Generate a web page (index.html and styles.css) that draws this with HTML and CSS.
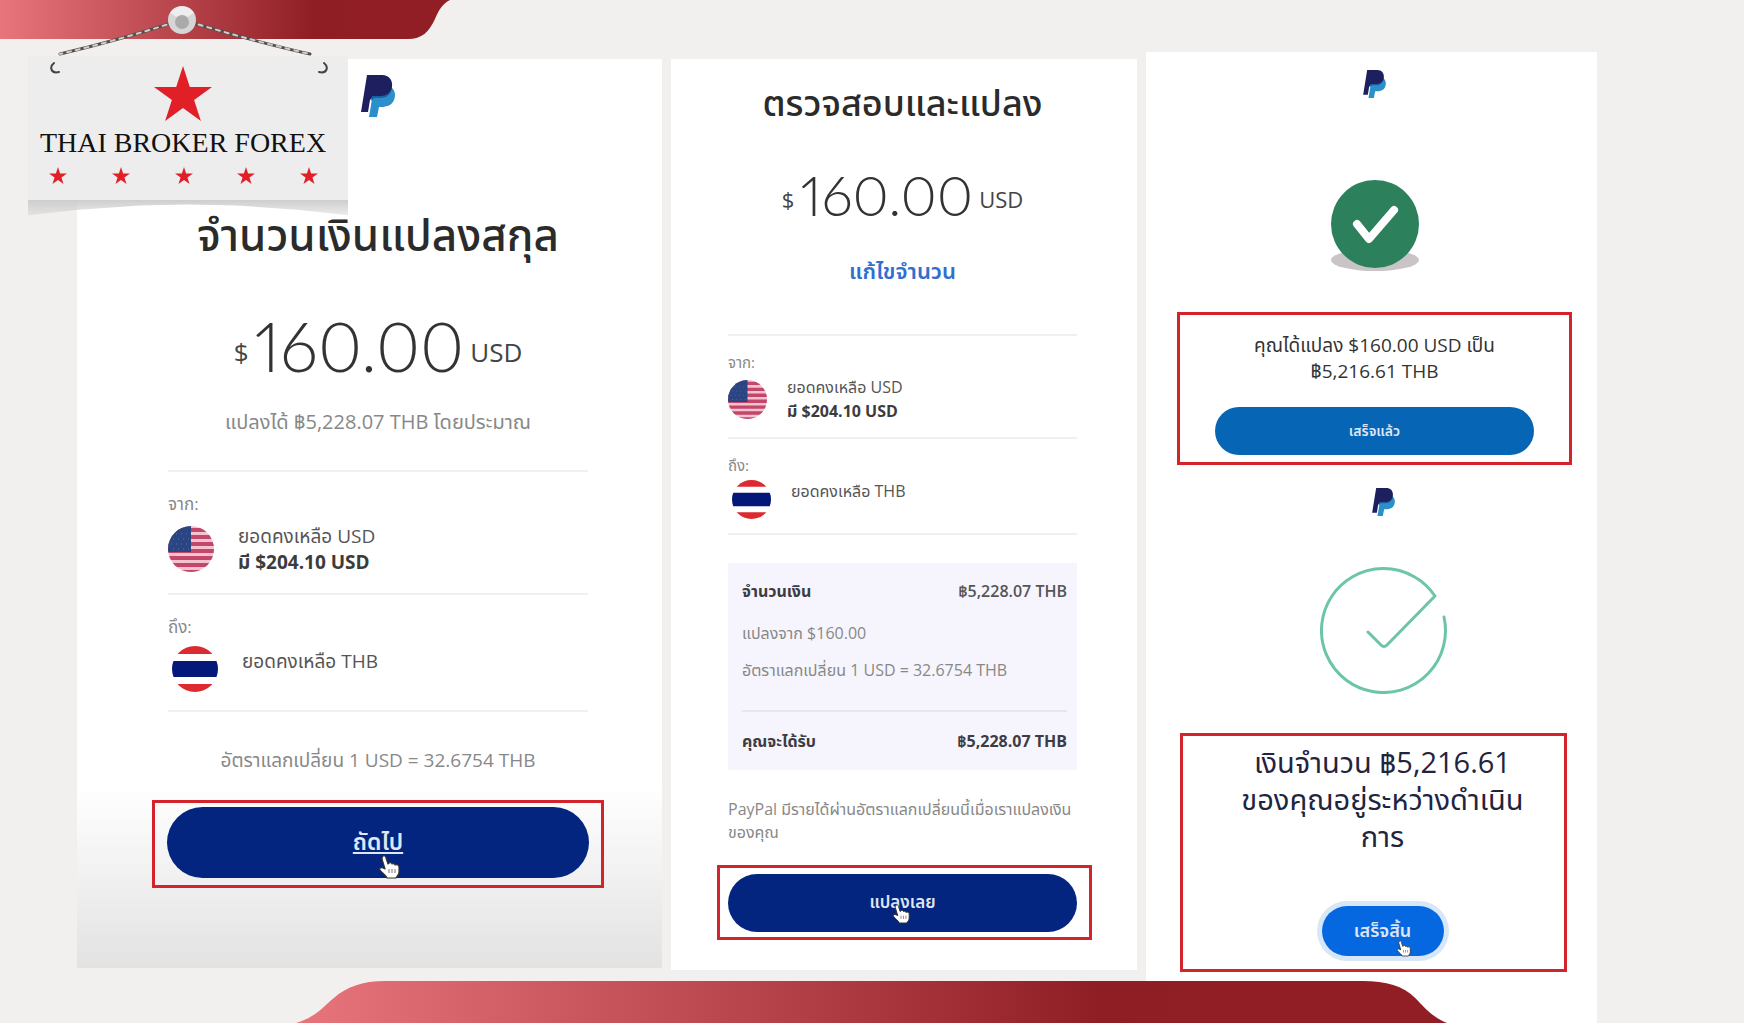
FILE: index.html
```html
<!DOCTYPE html>
<html lang="th">
  <head>
    <meta charset="UTF-8" />
    <meta name="viewport" content="width=device-width, initial-scale=1.0" />
    <title>Thai Broker Forex</title>
    <link rel="stylesheet" href="styles.css">
  </head>
  <body>
    <!-- shared shapes -->
    <svg class="defs" width="0" height="0" aria-hidden="true">
      <defs>
        <linearGradient id="red" x1="0" x2="1" y1="0" y2="0">
          <stop offset="0" stop-color="#e8757b" />
          <stop offset="0.35" stop-color="#bd4a50" />
          <stop offset="0.7" stop-color="#8f1e24" />
          <stop offset="1" stop-color="#921e25" />
        </linearGradient>
        <clipPath id="round"><circle cx="23" cy="23" r="23" /></clipPath>
        <symbol id="star" viewBox="0 0 58 55">
          <path fill="#e01f27" d="M29 0l6.8 21H58L40.100 34l6.800 21L29 42 11.100 55l6.800-21L0 21h22.200z" />
        </symbol>
        <symbol id="paypal" viewBox="0 0 34 42">
          <path fill="#2a8fca" d="M30 12c4 3 5 8 3 13-2 5-7 7-13 7h-2l-2 10H8l4-24z" />
          <path fill="#1d1f5e" d="M6 0h15c7 0 11 5 10 12-1 7-6 10-13 10h-6l-3 3-2 12H0z" />
          <path fill="#1c5f9f" d="M31 13c-1 6-5 10-12 10h-6l-3 3 1-5h9c5 0 9-3 11-8z" />
        </symbol>
        <symbol id="usa" viewBox="0 0 46 46">
          <g clip-path="url(#round)">
            <path fill="#f3c3d0" d="M0 0h46v46H0z" />
            <path stroke="#c2476a" stroke-width="4" d="M0 4h46M0 11h46M0 18h46M0 25h46M0 32h46M0 39h46M0 46h46" />
            <path fill="#2b4583" d="M0 0h23v26H0z" />
            <path stroke="#5670a8" stroke-width="1" stroke-dasharray="1 4" d="M3 8h20M5 13h18M3 18h20M5 23h18" />
          </g>
        </symbol>
        <symbol id="thai" viewBox="0 0 46 46">
          <g clip-path="url(#round)">
            <path fill="#fff" d="M0 0h46v46H0z" />
            <path fill="#dc2a30" d="M0 0h46v8H0zM0 38h46v8H0z" />
            <path fill="#04187a" d="M0 15h46v16H0z" />
          </g>
        </symbol>
        <symbol id="hand" viewBox="0 0 22 24">
          <path fill="#fff" stroke="#333" stroke-width="1.200" stroke-linejoin="round" d="M5 1c2-1 3 1 3 2l2 6 1-1c1-1 3 0 3 1 1-1 3 0 3 1 2-1 4 0 4 2v5c0 3-2 4-3 6H9c-1-3-5-5-7-8-1-2 1-3 3-2l2 1L4 4C4 3 4 2 5 1z" />
          <path stroke="#777" stroke-width="1" d="M11 14v4M14 14v4M17 14v4" />
        </symbol>
      </defs>
    </svg>

    <header class="header">
      <svg class="ribbonTop" viewBox="0 0 450 39" aria-hidden="true">
        <path fill="url(#red)" d="M0 0h450c-8 4-11 10-15 19-6 13-13 20-27 20H0z" />
      </svg>
      <div class="sign">
        <svg class="chain" viewBox="0 0 320 75" aria-hidden="true">
          <g fill="none" stroke-linecap="round">
            <path stroke="#55504f" stroke-width="3" d="M147 18C110 30 70 41 32 50M162 18c40 12 80 23 120 32" />
            <path stroke="#d2cccb" stroke-width="2" stroke-dasharray="4 5" d="M147 18C110 30 70 41 32 50M162 18c40 12 80 23 120 32" />
            <path stroke="#444" stroke-width="2" d="M26 59c-5 4-3 11 5 9M296 59c5 4 3 11-5 9" />
          </g>
          <circle cx="154" cy="16" r="14" fill="#d6d6d6" />
          <path fill="#eee" d="M142 9a14 14 0 0 1 24 0l-12 7z" />
          <circle cx="154" cy="18" r="7" fill="#aaa" />
        </svg>
        <svg class="bigStar" aria-hidden="true"><use href="#star" /></svg>
        <div class="signName">THAI BROKER FOREX</div>
        <div class="stars">
          <svg aria-hidden="true"><use href="#star" /></svg>
          <svg aria-hidden="true"><use href="#star" /></svg>
          <svg aria-hidden="true"><use href="#star" /></svg>
          <svg aria-hidden="true"><use href="#star" /></svg>
          <svg aria-hidden="true"><use href="#star" /></svg>
        </div>
      </div>
    </header>

    <main class="panels">
      <!-- step 1: amount -->
      <section class="panel panelAmount">
        <svg class="logo logoBig" role="img" aria-label="PayPal"><use href="#paypal" /></svg>
        <h1 class="title">จำนวนเงินแปลงสกุล</h1>
        <div class="amount"><span class="unit">$</span><span class="number">160.00</span><span class="unit">USD</span></div>
        <p class="estimate">แปลงได้ ฿5,228.07 THB โดยประมาณ</p>
        <div class="account">
          <div class="label">จาก:</div>
          <div class="row">
            <svg class="flag" aria-hidden="true"><use href="#usa" /></svg>
            <div class="balance">ยอดคงเหลือ USD<br><b>มี $204.10 USD</b></div>
          </div>
        </div>
        <div class="account accountTo">
          <div class="label">ถึง:</div>
          <div class="row">
            <svg class="flag" aria-hidden="true"><use href="#thai" /></svg>
            <div class="balance">ยอดคงเหลือ THB</div>
          </div>
        </div>
        <p class="rate">อัตราแลกเปลี่ยน 1 USD = 32.6754 THB</p>
        <div class="mark">
          <button class="btn btnNext" type="button">ถัดไป<svg class="hand" aria-hidden="true"><use href="#hand" /></svg></button>
        </div>
      </section>

      <!-- step 2: review -->
      <section class="panel panelReview">
        <h2 class="title">ตรวจสอบและแปลง</h2>
        <div class="amount"><span class="unit">$</span><span class="number">160.00</span><span class="unit">USD</span></div>
        <a class="edit" href="#">แก้ไขจำนวน</a>
        <div class="account">
          <div class="label">จาก:</div>
          <div class="row">
            <svg class="flag" viewBox="0 0 46 46" aria-hidden="true"><use href="#usa" /></svg>
            <div class="balance">ยอดคงเหลือ USD<br><b>มี $204.10 USD</b></div>
          </div>
        </div>
        <div class="account accountTo">
          <div class="label">ถึง:</div>
          <div class="row">
            <svg class="flag" viewBox="0 0 46 46" aria-hidden="true"><use href="#thai" /></svg>
            <div class="balance">ยอดคงเหลือ THB</div>
          </div>
        </div>
        <div class="summary">
          <div class="sumRow"><b>จำนวนเงิน</b><span class="sumValue">฿5,228.07 THB</span></div>
          <p class="sumFrom">แปลงจาก $160.00</p>
          <p class="sumRate">อัตราแลกเปลี่ยน 1 USD = 32.6754 THB</p>
          <div class="sumRow sumTotal"><b>คุณจะได้รับ</b><b>฿5,228.07 THB</b></div>
        </div>
        <p class="note">PayPal มีรายได้ผ่านอัตราแลกเปลี่ยนนี้เมื่อเราแปลงเงิน<br>ของคุณ</p>
        <div class="mark">
          <button class="btn btnConvert" type="button">แปลงเลย<svg class="hand" aria-hidden="true"><use href="#hand" /></svg></button>
        </div>
      </section>

      <!-- step 3: result -->
      <section class="panel panelDone">
        <svg class="logo" role="img" aria-label="PayPal"><use href="#paypal" /></svg>
        <svg class="check" viewBox="0 0 88 92" aria-hidden="true">
          <ellipse cx="44" cy="80" rx="44" ry="11" fill="#c9c5c6" />
          <circle cx="44" cy="44" r="44" fill="#2c815c" />
          <path fill="none" stroke="#fff" stroke-width="8" stroke-linecap="round" stroke-linejoin="round" d="M26 44l12 15 25-29" />
        </svg>
        <div class="mark markDone">
          <p class="doneText">คุณได้แปลง $160.00 USD เป็น<br>฿5,216.61 THB</p>
          <button class="btn btnDone" type="button">เสร็จแล้ว</button>
        </div>
        <div class="progress">
          <svg class="logo" role="img" aria-label="PayPal"><use href="#paypal" /></svg>
          <svg class="ring" viewBox="0 0 128 128" aria-hidden="true">
            <path fill="none" stroke="#6cc5a4" stroke-width="3" stroke-linecap="round" stroke-linejoin="round" d="M124 51A62 62 0 1 1 115 30L67 79q-3 3-6 0L48 66" />
          </svg>
        </div>
        <div class="mark markPending">
          <p class="pendingText">เงินจำนวน ฿5,216.61<br>ของคุณอยู่ระหว่างดำเนิน<br>การ</p>
          <button class="btn btnFinish" type="button">เสร็จสิ้น<svg class="hand" aria-hidden="true"><use href="#hand" /></svg></button>
        </div>
      </section>
    </main>

    <svg class="ribbonBottom" viewBox="0 0 1157 42" preserveAspectRatio="none" aria-hidden="true">
      <path fill="url(#red)" d="M0 42c20-6 27-16 38-25C51 6 66 0 90 0h982c24 0 41 5 53 17 9 9 17 19 32 25z" />
    </svg>
  </body>
</html>
```
FILE: styles.css
```css
* {
  margin: 0;
  padding: 0;
  box-sizing: border-box;
}
body {
  position: relative;
  display: flex;
  flex-direction: column;
  min-height: 100vh;
  background: #f1f0ee;
  color: #333;
  font-family: "Open Sans", "Noto Sans", "Noto Sans Thai", sans-serif;
}
.defs {
  position: absolute;
}
.header {
  height: 52px;
}
.ribbonTop {
  display: block;
  width: 450px;
  height: 39px;
}
/* sign hanging over the first panel */
.sign {
  position: absolute;
  z-index: 2;
  top: 56px;
  left: 28px;
  width: 320px;
  height: 144px;
  padding: 10px 10px 0 0;
  background: #eeedee;
  text-align: center;
}
.sign::before {
  content: "";
  position: absolute;
  z-index: -1;
  left: 0;
  right: 0;
  top: 100%;
  height: 18px;
  background: linear-gradient(#cfcecf, rgba(207, 206, 207, 0.300));
  clip-path: polygon(0 0, 100% 0, 100% 85%, 85% 55%, 65% 30%, 50% 25%, 35% 30%, 15% 55%, 0 85%);
}
.chain {
  position: absolute;
  left: 0;
  top: -52px;
  width: 320px;
  height: 75px;
}
.bigStar {
  display: block;
  width: 58px;
  height: 55px;
  margin: 0 auto;
}
.signName {
  margin-top: 6px;
  color: #111;
  font: 28px/32px "Liberation Serif", serif;
  white-space: nowrap;
}
.stars {
  display: flex;
  justify-content: space-between;
  margin: 8px 20px 0 21px;
}
.stars svg {
  width: 18px;
  height: 17px;
}
.panels {
  flex: 1;
  display: grid;
  grid-template-columns: 585fr 466fr 451fr;
  gap: 9px;
  padding: 0 147px 0 77px;
}
.panel {
  display: flex;
  flex-direction: column;
  background: #fff;
}
.logo {
  display: block;
  width: 23px;
  height: 28px;
  margin: 0 auto;
}
.title {
  color: #2b2b2b;
  font-weight: 500;
  text-align: center;
  white-space: nowrap;
}
.amount {
  display: flex;
  justify-content: center;
  align-items: center;
}
.number {
  font-family: Lato, "Open Sans", sans-serif;
  font-weight: 300;
  font-variant-numeric: proportional-nums;
}
.unit {
  color: #444;
}
.account {
  border-top: 2px solid #f0f0f0;
}
.accountTo {
  border-bottom: 2px solid #f0f0f0;
}
.label {
  color: #888;
}
.row {
  display: flex;
  align-items: center;
  gap: 24px;
}
.balance {
  color: #555;
}
.balance b {
  color: #3c3c3c;
}
.accountTo .row {
  padding-left: 4px;
}
.mark {
  border: 3px solid #d3232b;
}
.btn {
  position: relative;
  display: block;
  width: 100%;
  border: 0;
  border-radius: 36px;
  background: #03257f;
  color: #dfe6f5;
  font-family: inherit;
  font-weight: 600;
  cursor: pointer;
}
.hand {
  position: absolute;
  width: 18px;
  height: 20px;
}

/* step 1 */
.panelAmount {
  align-self: start;
  margin-top: 7px;
  padding: 16px 74px 80px 91px;
  background: linear-gradient(#fff 80%, #e2e2e2);
}
.logoBig {
  width: 34px;
  height: 42px;
}
.panelAmount .title {
  margin-top: 89px;
  font-size: 44px;
  line-height: 56px;
}
.panelAmount .amount {
  margin-top: 44px;
  gap: 6px;
}
.panelAmount .number {
  font-size: 68px;
  line-height: 80px;
}
.panelAmount .unit {
  padding-top: 12px;
  font-size: 26px;
}
.estimate,
.rate {
  color: #888;
  line-height: 28px;
  text-align: center;
}
.estimate {
  margin: 22px 0 34px;
  font-size: 20px;
}
.panelAmount .account {
  padding: 20px 0 18px;
}
.panelAmount .label {
  font-size: 17px;
  line-height: 24px;
}
.panelAmount .row {
  margin-top: 7px;
}
.panelAmount .balance {
  font-size: 19px;
  line-height: 26px;
}
.panelAmount .flag {
  width: 46px;
  height: 46px;
}
.accountTo .balance {
  padding-bottom: 16px;
}
.rate {
  margin: 34px 0 26px;
  font-size: 19px;
}
.panelAmount .mark {
  margin: 0 -16px;
  padding: 4px 12px 7px;
}
.btnNext {
  height: 71px;
  font-size: 23px;
  text-decoration: underline;
}
.btnNext .hand {
  left: 50%;
  top: 48px;
  width: 22px;
  height: 24px;
}

/* step 2 */
.panelReview {
  align-self: start;
  margin-top: 7px;
  padding: 22px 60px 30px 57px;
}
.panelReview .title {
  font-size: 36px;
  line-height: 44px;
}
.panelReview .amount {
  margin-top: 38px;
  gap: 6px;
}
.panelReview .number {
  font-size: 56px;
  line-height: 64px;
}
.panelReview .unit {
  padding-top: 8px;
  font-size: 22px;
}
.edit {
  align-self: center;
  margin: 29px 0 50px;
  color: #2f6fd0;
  font-size: 22px;
  font-weight: 600;
  line-height: 28px;
  text-decoration: none;
}
.panelReview .account {
  padding: 16px 0 14px;
}
.panelReview .label {
  font-size: 15px;
  line-height: 20px;
}
.panelReview .row {
  margin-top: 3px;
  gap: 20px;
}
.panelReview .balance {
  font-size: 16px;
  line-height: 24px;
}
.panelReview .flag {
  width: 39px;
  height: 39px;
}
.panelReview .accountTo .row {
  margin-top: 4px;
}
.summary {
  margin-top: 28px;
  padding: 16px 10px 17px 14px;
  background: #f6f5fd;
  color: #3c3c44;
  font-size: 16px;
  line-height: 24px;
}
.sumRow {
  display: flex;
  justify-content: space-between;
}
.sumValue {
  color: #555;
  font-weight: 600;
}
.sumFrom,
.sumRate,
.note {
  color: #888;
}
.sumFrom {
  margin: 18px 0 13px;
}
.sumTotal {
  margin-top: 28px;
  padding-top: 17px;
  border-top: 2px solid #e6e5f0;
}
.note {
  margin: 28px 0 21px;
  font-size: 16px;
  line-height: 23px;
  white-space: nowrap;
}
.panelReview .mark {
  margin: 0 -15px 0 -11px;
  padding: 6px 12px 5px 8px;
}
.btnConvert {
  height: 58px;
  font-size: 17px;
}
.btnConvert .hand {
  left: 47%;
  top: 30px;
}

/* step 3 */
.panelDone {
  padding: 18px 25px 50px 31px;
}
.check {
  width: 88px;
  height: 92px;
  margin: 82px auto 40px;
}
.markDone {
  padding: 17px 35px 7px;
  text-align: center;
}
.doneText {
  font-size: 19px;
  line-height: 26px;
  white-space: nowrap;
}
.btnDone {
  height: 48px;
  margin-top: 23px;
  background: #0665b5;
  font-size: 14px;
}
.progress {
  padding: 23px 0 39px 18px;
}
.ring {
  display: block;
  width: 128px;
  height: 128px;
  margin: 50px auto 0;
}
.markPending {
  margin: 0 5px 0 3px;
  padding: 7px 0 13px 18px;
  text-align: center;
}
.pendingText {
  color: #1f2540;
  font-size: 29px;
  line-height: 37px;
  white-space: nowrap;
}
.btnFinish {
  width: 122px;
  height: 50px;
  margin: 52px auto 0;
  background: #0668e1;
  box-shadow: 0 0 0 5px #d8e7f8;
  font-size: 18px;
}
.btnFinish .hand {
  left: 74px;
  top: 34px;
  width: 15px;
  height: 17px;
}
.ribbonBottom {
  position: absolute;
  bottom: 0;
  left: 17%;
  width: 66%;
  height: 42px;
}
```
